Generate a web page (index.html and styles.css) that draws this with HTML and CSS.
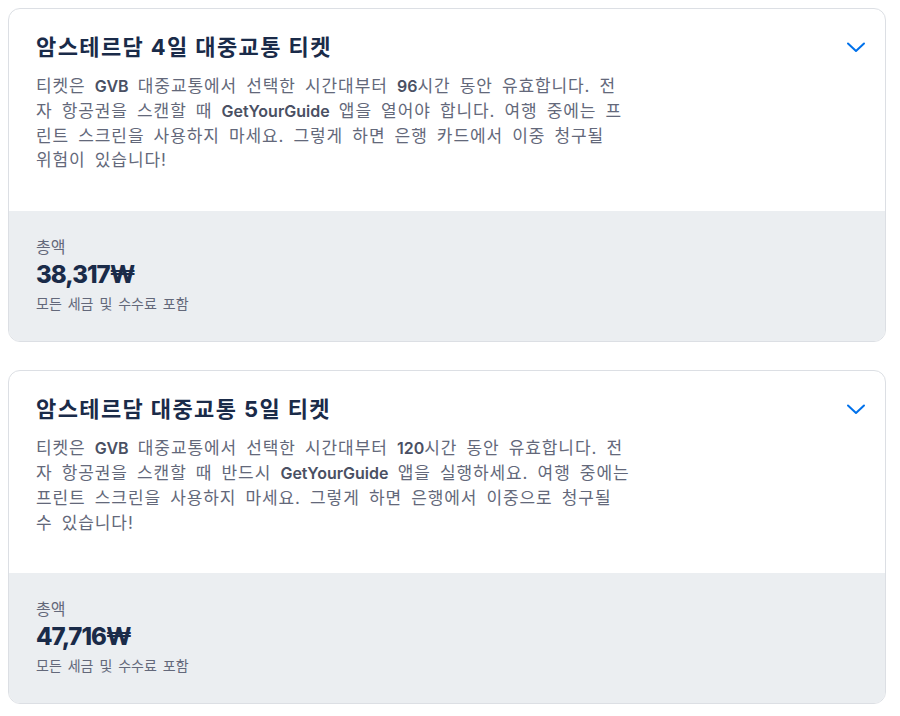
FILE: index.html
```html
<!DOCTYPE html>
<html lang="ko">
<head>
<meta charset="utf-8">
<link rel="stylesheet" href="styles.css">
</head>
<body>
<div class="list">
  <section class="card">
    <div class="head">
      <div class="info">
        <h2 class="title">암스테르담 4일 대중교통 티켓</h2>
        <p class="desc">티켓은 <b>GVB</b> 대중교통에서 선택한 시간대부터 <b>96</b>시간 동안 유효합니다. 전<br>자 항공권을 스캔할 때 <b>GetYourGuide</b> 앱을 열어야 합니다. 여행 중에는 프<br>린트 스크린을 사용하지 마세요. 그렇게 하면 은행 카드에서 이중 청구될<br>위험이 있습니다!</p>
      </div>
      <svg class="chev" viewBox="0 0 24 24" width="24" height="24"><path d="M4 8.5l8 7.5 8-7.5" fill="none" stroke="#0071eb" stroke-width="2" stroke-linecap="round" stroke-linejoin="round"/></svg>
    </div>
    <div class="total">
      <div class="label">총액</div>
      <div class="price">38,317₩</div>
      <div class="note">모든 세금 및 수수료 포함</div>
    </div>
  </section>
  <section class="card">
    <div class="head">
      <div class="info">
        <h2 class="title">암스테르담 대중교통 5일 티켓</h2>
        <p class="desc">티켓은 <b>GVB</b> 대중교통에서 선택한 시간대부터 <b>120</b>시간 동안 유효합니다. 전<br>자 항공권을 스캔할 때 반드시 <b>GetYourGuide</b> 앱을 실행하세요. 여행 중에는<br>프린트 스크린을 사용하지 마세요. 그렇게 하면 은행에서 이중으로 청구될<br>수 있습니다!</p>
      </div>
      <svg class="chev" viewBox="0 0 24 24" width="24" height="24"><path d="M4 8.5l8 7.5 8-7.5" fill="none" stroke="#0071eb" stroke-width="2" stroke-linecap="round" stroke-linejoin="round"/></svg>
    </div>
    <div class="total">
      <div class="label">총액</div>
      <div class="price">47,716₩</div>
      <div class="note">모든 세금 및 수수료 포함</div>
    </div>
  </section>
</div>
</body>
</html>
```
FILE: styles.css
```css
body {
  margin: 8px;
  background: #fff;
  font-family: Inter, "Noto Sans CJK KR", sans-serif;
  color: #1a2b49;
}
.list {
  width: 878px;
  display: flex;
  flex-direction: column;
  gap: 28px;
}
.card {
  border: 1px solid #dcdfe4;
  border-radius: 12px;
  overflow: hidden;
  background: #fff;
}
.head {
  display: flex;
  justify-content: space-between;
  align-items: flex-start;
  padding: 24px 17px 38px 27px;
}
.info {
  width: 680px;
}
.title {
  margin: 0;
  font-size: 22px;
  line-height: 28px;
  font-weight: 700;
  letter-spacing: 1.4px;
  color: #1a2b49;
}
.desc {
  margin: 13px 0 0;
  font-size: 17px;
  line-height: 24.8px;
  letter-spacing: 0.9px;
  word-spacing: 3.5px;
  color: #63687a;
}
.desc b {
  font-size: 16px;
  font-weight: 600;
  letter-spacing: 0;
  color: #4a5063;
}
.chev {
  margin-top: 2px;
  flex: none;
}
.total {
  background: #ebeef1;
  padding: 26px 27px 28px;
}
.label {
  font-size: 16px;
  line-height: 20px;
  color: #63687a;
}
.price {
  margin-top: 4px;
  font-size: 24px;
  line-height: 28px;
  font-weight: 800;
  color: #1a2b49;
  letter-spacing: -1px;
}
.note {
  margin-top: 6px;
  font-size: 14px;
  line-height: 18px;
  word-spacing: 2px;
  color: #63687a;
}
```
